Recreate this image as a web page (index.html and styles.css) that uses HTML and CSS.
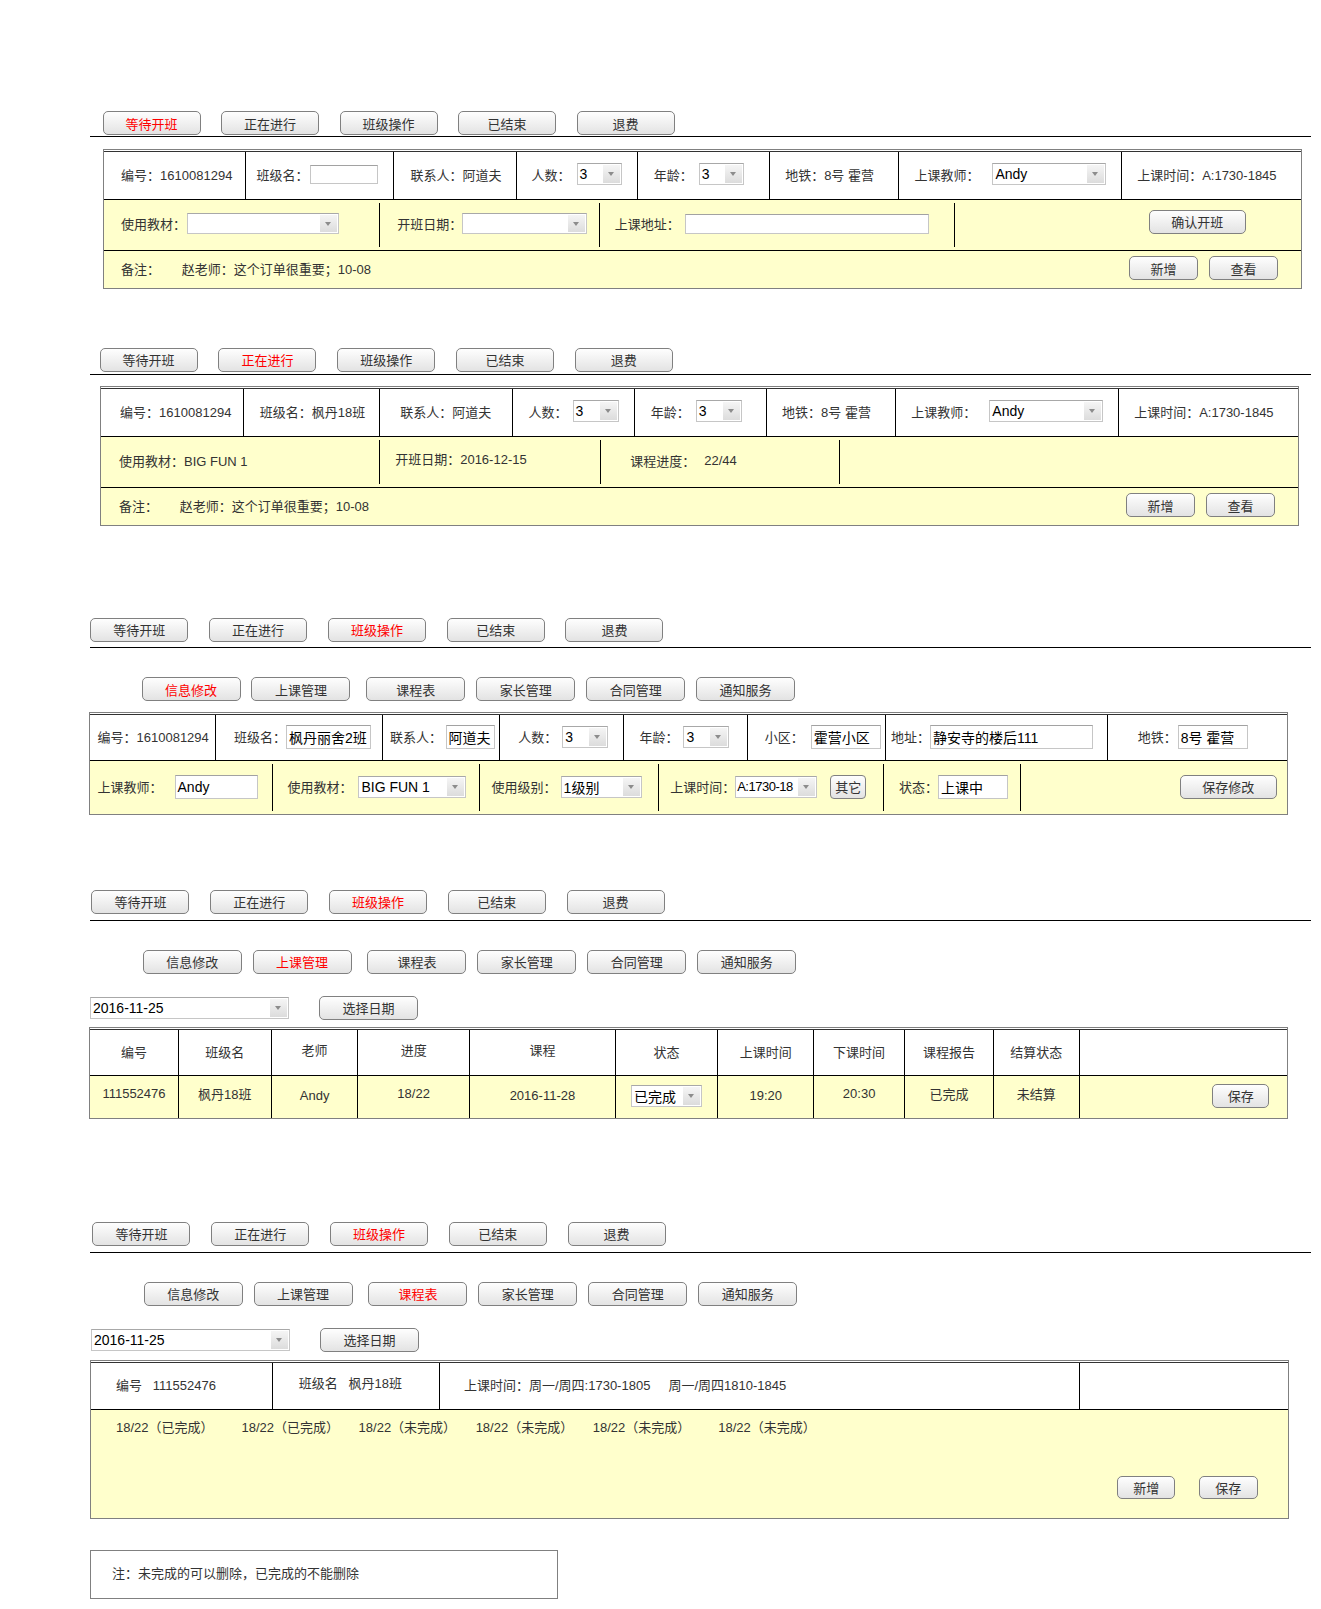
FILE: index.html
```html
<!DOCTYPE html>
<html lang="zh-CN">
<head>
<meta charset="utf-8">
<title>班级管理</title>
<link rel="stylesheet" href="styles.css">
</head>
<body>
<div class="page">

<!-- 1. 等待开班 -->
<section class="sec s1">
  <div class="tabs">
    <span class="btn tab on">等待开班</span>
    <span class="btn tab">正在进行</span>
    <span class="btn tab">班级操作</span>
    <span class="btn tab">已结束</span>
    <span class="btn tab">退费</span>
  </div>
  <div class="box">
    <div class="row r1">
      <div class="cell">编号：1610081294</div>
      <div class="cell">班级名：<span class="in w68 h19 ml1"></span></div>
      <div class="cell">联系人：阿道夫</div>
      <div class="cell">人数：<span class="sel w45 ml6"><span class="v">3</span><span class="a"></span></span></div>
      <div class="cell">年龄：<span class="sel w45 ml6"><span class="v">3</span><span class="a"></span></span></div>
      <div class="cell">地铁：8号 霍营</div>
      <div class="cell">上课教师：<span class="sel w114 ml13"><span class="v">Andy</span><span class="a"></span></span></div>
      <div class="cell">上课时间：A:1730-1845</div>
    </div>
    <div class="row r2 y">
      <div class="cell">使用教材：<span class="sel w152 h21 ml1"><span class="v"></span><span class="a"></span></span></div>
      <div class="cell">开班日期：<span class="sel w125 h21"><span class="v"></span><span class="a"></span></span></div>
      <div class="cell">上课地址：<span class="in w244 h20 ml5"></span></div>
      <div class="cell end"><span class="btn w97 up">确认开班</span></div>
    </div>
    <div class="row r3 y">
      <div class="cell">备注：<span class="note-text">赵老师：这个订单很重要；10-08</span><span class="acts"><span class="btn w69">新增</span><span class="btn w69">查看</span></span></div>
    </div>
  </div>
</section>

<!-- 2. 正在进行 -->
<section class="sec s2">
  <div class="tabs">
    <span class="btn tab">等待开班</span>
    <span class="btn tab on">正在进行</span>
    <span class="btn tab">班级操作</span>
    <span class="btn tab">已结束</span>
    <span class="btn tab">退费</span>
  </div>
  <div class="box">
    <div class="row r1">
      <div class="cell">编号：1610081294</div>
      <div class="cell">班级名：枫丹18班</div>
      <div class="cell">联系人：阿道夫</div>
      <div class="cell">人数：<span class="sel w46 ml5"><span class="v">3</span><span class="a"></span></span></div>
      <div class="cell">年龄：<span class="sel w46 ml6"><span class="v">3</span><span class="a"></span></span></div>
      <div class="cell">地铁：8号 霍营</div>
      <div class="cell">上课教师：<span class="sel w114 ml13"><span class="v">Andy</span><span class="a"></span></span></div>
      <div class="cell">上课时间：A:1730-1845</div>
    </div>
    <div class="row r2 y">
      <div class="cell">使用教材：BIG FUN 1</div>
      <div class="cell"><span class="up2">开班日期：2016-12-15</span></div>
      <div class="cell">课程进度：<span class="ml9">22/44</span></div>
      <div class="cell"></div>
    </div>
    <div class="row r3 y">
      <div class="cell">备注：<span class="note-text">赵老师：这个订单很重要；10-08</span><span class="acts"><span class="btn w69">新增</span><span class="btn w69">查看</span></span></div>
    </div>
  </div>
</section>

<!-- 3. 班级操作 / 信息修改 -->
<section class="sec s3">
  <div class="tabs">
    <span class="btn tab">等待开班</span>
    <span class="btn tab">正在进行</span>
    <span class="btn tab on">班级操作</span>
    <span class="btn tab">已结束</span>
    <span class="btn tab">退费</span>
  </div>
  <div class="subtabs">
    <span class="btn on">信息修改</span>
    <span class="btn">上课管理</span>
    <span class="btn">课程表</span>
    <span class="btn">家长管理</span>
    <span class="btn">合同管理</span>
    <span class="btn">通知服务</span>
  </div>
  <div class="box">
    <div class="row r1">
      <div class="cell">编号：1610081294</div>
      <div class="cell">班级名：<span class="in w85 h24">枫丹丽舍2班</span></div>
      <div class="cell">联系人：<span class="in w49 h24 ml3">阿道夫</span></div>
      <div class="cell">人数：<span class="sel w46 ml5"><span class="v">3</span><span class="a"></span></span></div>
      <div class="cell">年龄：<span class="sel w46 ml5"><span class="v">3</span><span class="a"></span></span></div>
      <div class="cell">小区：<span class="in w70 h24 ml7">霍营小区</span></div>
      <div class="cell">地址：<span class="in w163 h24">静安寺的楼后111</span></div>
      <div class="cell">地铁：<span class="in w70 h24 ml1">8号 霍营</span></div>
    </div>
    <div class="row r2 y">
      <div class="cell">上课教师：<span class="in w83 h24 ml12">Andy</span></div>
      <div class="cell">使用教材：<span class="sel w108 ml6"><span class="v">BIG FUN 1</span><span class="a"></span></span></div>
      <div class="cell">使用级别：<span class="sel w81 ml4"><span class="v">1级别</span><span class="a"></span></span></div>
      <div class="cell">上课时间：<span class="sel w82"><span class="v tight">A:1730-18</span><span class="a"></span></span><span class="btn small ml13">其它</span></div>
      <div class="cell">状态：<span class="in w70 h24">上课中</span></div>
      <div class="cell end"><span class="btn w97">保存修改</span></div>
    </div>
  </div>
</section>

<!-- 4. 上课管理 -->
<section class="sec s4">
  <div class="tabs">
    <span class="btn tab">等待开班</span>
    <span class="btn tab">正在进行</span>
    <span class="btn tab on">班级操作</span>
    <span class="btn tab">已结束</span>
    <span class="btn tab">退费</span>
  </div>
  <div class="subtabs">
    <span class="btn">信息修改</span>
    <span class="btn on">上课管理</span>
    <span class="btn">课程表</span>
    <span class="btn">家长管理</span>
    <span class="btn">合同管理</span>
    <span class="btn">通知服务</span>
  </div>
  <div class="daterow">
    <span class="sel date"><span class="v">2016-11-25</span><span class="a"></span></span>
    <span class="btn pick">选择日期</span>
  </div>
  <div class="box tbl">
    <div class="row r1">
      <div class="cell">编号</div>
      <div class="cell">班级名</div>
      <div class="cell"><span class="up2">老师</span></div>
      <div class="cell"><span class="up2">进度</span></div>
      <div class="cell"><span class="up2">课程</span></div>
      <div class="cell">状态</div>
      <div class="cell">上课时间</div>
      <div class="cell">下课时间</div>
      <div class="cell">课程报告</div>
      <div class="cell">结算状态</div>
      <div class="cell"></div>
    </div>
    <div class="row r2 y">
      <div class="cell"><span class="up2">111552476</span></div>
      <div class="cell"><span class="up2">枫丹18班</span></div>
      <div class="cell">Andy</div>
      <div class="cell"><span class="up2">18/22</span></div>
      <div class="cell">2016-11-28</div>
      <div class="cell"><span class="sel w71"><span class="v">已完成</span><span class="a"></span></span></div>
      <div class="cell">19:20</div>
      <div class="cell"><span class="up2">20:30</span></div>
      <div class="cell"><span class="up2">已完成</span></div>
      <div class="cell"><span class="up2">未结算</span></div>
      <div class="cell end"><span class="btn w57">保存</span></div>
    </div>
  </div>
</section>

<!-- 5. 课程表 -->
<section class="sec s5">
  <div class="tabs">
    <span class="btn tab">等待开班</span>
    <span class="btn tab">正在进行</span>
    <span class="btn tab on">班级操作</span>
    <span class="btn tab">已结束</span>
    <span class="btn tab">退费</span>
  </div>
  <div class="subtabs">
    <span class="btn">信息修改</span>
    <span class="btn">上课管理</span>
    <span class="btn on">课程表</span>
    <span class="btn">家长管理</span>
    <span class="btn">合同管理</span>
    <span class="btn">通知服务</span>
  </div>
  <div class="daterow">
    <span class="sel date"><span class="v">2016-11-25</span><span class="a"></span></span>
    <span class="btn pick">选择日期</span>
  </div>
  <div class="box">
    <div class="row r1">
      <div class="cell">编号&nbsp;&nbsp;&nbsp;111552476</div>
      <div class="cell"><span class="up2">班级名&nbsp;&nbsp;&nbsp;枫丹18班</span></div>
      <div class="cell">上课时间：周一/周四:1730-1805&nbsp;&nbsp;&nbsp;&nbsp;&nbsp;周一/周四1810-1845</div>
      <div class="cell"></div>
    </div>
    <div class="row r2 y">
      <div class="sched">
        <div class="items">
          <span>18/22（已完成）</span>
          <span class="gapx">18/22（已完成）</span>
          <span>18/22（未完成）</span>
          <span>18/22（未完成）</span>
          <span>18/22（未完成）</span>
          <span class="gapx">18/22（未完成）</span>
        </div>
        <div class="acts2">
          <span class="btn w58">新增</span>
          <span class="btn w58">保存</span>
        </div>
      </div>
    </div>
  </div>
  <div class="notebox">注：未完成的可以删除，已完成的不能删除</div>
</section>

</div>
</body>
</html>
```

FILE: styles.css
```css
* { box-sizing: border-box; }

body {
  margin: 0;
  background: #fff;
  font-family: "Liberation Sans", "Noto Sans CJK SC", sans-serif;
  font-size: 13px;
  color: #333;
}

.page { width: 1321px; padding: 0 0 10px 90px; }
.sec { width: 1221px; }

.s1 { margin-top: 111px; }
.s2 { margin-top: 59px; }
.s3 { margin-top: 92px; }
.s4 { margin-top: 74.3px; }
.s5 { margin-top: 103px; }

/* ---------- buttons ---------- */
.btn {
  display: inline-flex;
  align-items: center;
  justify-content: center;
  flex: none;
  height: 24px;
  border: 1px solid #808080;
  border-radius: 5px;
  background: linear-gradient(#fefefe, #e3e3e3);
  color: #333;
  font-size: 13px;
  white-space: nowrap;
}
.btn.on { color: #f00; }
.btn.small { width: 36px; height: 24px; border-radius: 4px; }
.w97 { width: 97.5px; }
.w69 { width: 69px; }
.w58 { width: 58.5px; height: 23px; }
.w57 { width: 56.5px; }

/* ---------- tab bars ---------- */
.tabs {
  display: flex;
  gap: 20.8px;
  border-bottom: 1px solid #000;
}
.tab { width: 98px; }
.s1 .tabs { padding: 0 0 1px 12.6px; gap: 20.5px; }
.s2 .tabs { padding: 0 0 2px 9.6px; }
.s3 .tabs { padding: 0 0 5.6px 0.3px; }
.s4 .tabs { padding: 0 0 6.3px 1.4px; }
.s5 .tabs { padding: 0 0 6px 2.4px; }

.subtabs {
  display: flex;
  gap: 10.9px;
  margin-top: 29px;
}
.subtabs .btn { width: 99px; }
.subtabs .btn:nth-child(3) { margin-left: 5px; }
.s3 .subtabs { padding-left: 51.6px; }
.s4 .subtabs { padding-left: 52.7px; margin-top: 28.7px; }
.s5 .subtabs { padding-left: 53.7px; }

/* ---------- form controls ---------- */
.in {
  display: inline-flex;
  align-items: center;
  flex: none;
  height: 22px;
  padding-left: 2px;
  border: 1px solid #c6c6c6;
  border-top-color: #a2a2a2;
  background: #fff;
  color: #000;
  font-size: 14px;
  white-space: nowrap;
  overflow: hidden;
}
.sel {
  display: inline-flex;
  flex: none;
  height: 22px;
  border: 1px solid #c6c6c6;
  border-top-color: #a8a8a8;
  background: #fff;
  color: #000;
  font-size: 14px;
}
.sel .v {
  flex: 1;
  min-width: 0;
  display: flex;
  align-items: center;
  padding-left: 2px;
  white-space: nowrap;
  overflow: hidden;
}
.sel .v.tight { font-size: 13px; letter-spacing: -0.5px; padding-left: 1px; }
.sel .a {
  position: relative;
  flex: none;
  width: 17px;
  margin: 1px;
  background: linear-gradient(#f5f5f5, #dcdcdc);
}
.sel .a::after {
  content: "";
  position: absolute;
  left: 50%;
  top: 50%;
  margin: -2px 0 0 -3.5px;
  border-left: 3.5px solid transparent;
  border-right: 3.5px solid transparent;
  border-top: 4px solid #8c8c8c;
}

.w45 { width: 45px; }
.w46 { width: 46px; }
.w49 { width: 49px; }
.w68 { width: 68px; }
.w70 { width: 70px; }
.w71 { width: 71px; }
.w81 { width: 81px; }
.w82 { width: 82px; }
.w83 { width: 83px; }
.w85 { width: 85px; }
.w108 { width: 108px; }
.w114 { width: 114px; }
.w125 { width: 125px; }
.w152 { width: 152px; }
.w163 { width: 163px; }
.w244 { width: 244px; }
.h19 { height: 19px; }
.h20 { height: 20px; }
.h21 { height: 21px; }
.h24 { height: 24px; }
.ml1 { margin-left: 1px; }
.ml3 { margin-left: 3.5px; }
.ml4 { margin-left: 4px; }
.ml5 { margin-left: 5px; }
.ml6 { margin-left: 6px; }
.ml7 { margin-left: 7px; }
.ml9 { margin-left: 9px; }
.ml12 { margin-left: 12px; }
.ml13 { margin-left: 13px; }
.up { position: relative; top: -2px; }
.up2 { position: relative; top: -2px; }

/* ---------- boxes ---------- */
.box {
  width: 1199px;
  border: 1px solid #808080;
  padding-top: 1px;
  background: #fff;
}
.row {
  display: grid;
  border-bottom: 1px solid #000;
}
.row:first-child { border-top: 1px solid #333; }
.row:last-child { border-bottom: 0; }
.y { background: #ffffcc; }

.cell {
  display: flex;
  align-items: center;
  min-width: 0;
  padding-left: 15.4px;
  padding-bottom: 2px;
  border-right: 1px solid #000;
  white-space: nowrap;
}
.cell:last-child { border-right: 0; }
.cell.end { justify-content: flex-end; }

.r2:not(.tbl .r2) .cell { margin: 3px 0; }

/* section 1 */
.s1 .box { margin: 11.5px 0 0 12.6px; }
.s1 .r1 { height: 49px; grid-template-columns: 142.7px 147.8px 123.2px 121.1px 131.4px 129.3px 222.7px 1fr; }
.s1 .r1 .cell:nth-child(1) { padding-left: 17.5px; }
.s1 .r1 .cell:nth-child(2) { padding-left: 10.3px; }
.s1 .r1 .cell:nth-child(3) { padding-left: 16.4px; }
.s1 .r1 .cell:nth-child(4) { padding-left: 14.3px; }
.s1 .r2 { height: 51px; grid-template-columns: 276.2px 220.6px 354.2px 1fr; }
.s1 .r2 .cell:nth-child(1) { padding-left: 17.5px; }
.s1 .r2 .cell:nth-child(2) { padding-left: 17.4px; }
.s1 .r2 .cell:nth-child(3) { padding-left: 14.4px; }
.s1 .r2 .cell:nth-child(4) { padding-right: 54.5px; }
.s1 .r3, .s2 .r3 { height: 37px; grid-template-columns: 1fr; }
.s1 .r3 .cell { padding-left: 17.5px; padding-right: 22.5px; }

.note-text { margin-left: 21.7px; }
.acts { margin-left: auto; display: flex; gap: 11px; }

/* section 2 */
.s2 .box { margin: 11.2px 0 0 9.6px; }
.s2 .r1 { height: 49px; grid-template-columns: 143.7px 135.5px 133.4px 122.1px 131.4px 129.3px 222.8px 1fr; }
.s2 .r1 .cell:nth-child(1) { padding-left: 19.5px; }
.s2 .r1 .cell:nth-child(3) { padding-left: 20.5px; }
.s2 .r2 { height: 51px; grid-template-columns: 279.2px 221.7px 238.1px 1fr; }
.s2 .r2 .cell:nth-child(1) { padding-left: 18.4px; }
.s2 .r2 .cell:nth-child(3) { padding-left: 28.7px; }
.s2 .r3 .cell { padding-left: 18.4px; padding-right: 22.6px; }

/* section 3 */
.s3 .box { margin: 11px 0 0 -0.7px; }
.s3 .r1 { height: 47px; grid-template-columns: 125.2px 167.3px 117.1px 124.1px 124.2px 137.6px 222.7px 1fr; }
.s3 .r1 .cell:nth-child(1) { padding-left: 7.2px; }
.s3 .r1 .cell:nth-child(2) { padding-left: 18.5px; }
.s3 .r1 .cell:nth-child(3) { padding-left: 7.2px; }
.s3 .r1 .cell:nth-child(4) { padding-left: 18.4px; }
.s3 .r1 .cell:nth-child(6) { padding-left: 16.5px; }
.s3 .r1 .cell:nth-child(7) { padding-left: 5.2px; }
.s3 .r1 .cell:nth-child(8) { padding-left: 29.2px; }
.s3 .r2 { height: 53px; grid-template-columns: 182.7px 207.4px 178.6px 224.7px 137.6px 1fr; }
.s3 .r2 .cell { margin: 4px 0 5px; }
.s3 .r2 .cell:nth-child(1) { padding-left: 7.2px; }
.s3 .r2 .cell:nth-child(2) { padding-left: 14.4px; }
.s3 .r2 .cell:nth-child(3) { padding-left: 11.2px; }
.s3 .r2 .cell:nth-child(4) { padding-left: 11.2px; }
.s3 .r2 .cell:nth-child(6) { padding-right: 10.2px; }

/* date rows */
.daterow {
  display: flex;
  align-items: center;
  height: 24px;
  margin-top: 22px;
}
.sel.date { width: 199px; }
.btn.pick { width: 99.6px; margin-left: 29.8px; }
.s5 .daterow { padding-left: 1px; }

/* section 4 table */
.s4 .box { margin: 7.3px 0 0 -0.7px; }
.tbl .row { grid-template-columns: 88.3px 93.4px 86.2px 111.9px 145.7px 102.7px 95.5px 91.3px 88.3px 86.2px 1fr; }
.tbl .r1 { height: 47px; }
.tbl .r2 { height: 42px; }
.tbl .cell { justify-content: center; padding-left: 0; }
.tbl .cell.end { justify-content: flex-end; padding-right: 18.4px; }

/* section 5 */
.s5 .box { margin: 7.7px 0 0 0.3px; }
.s5 .r1 { height: 48px; grid-template-columns: 181.7px 167.3px 639.5px 1fr; }
.s5 .r1 .cell:nth-child(1) { padding-left: 24.7px; }
.s5 .r1 .cell:nth-child(2) { padding-left: 25.7px; }
.s5 .r1 .cell:nth-child(3) { padding-left: 23.7px; }
.s5 .r2 { height: 108px; grid-template-columns: 1fr; }
.sched {
  display: flex;
  flex-direction: column;
  padding: 7px 30.8px 18.7px 24.7px;
}
.items { display: flex; gap: 19.5px; }
.items .gapx { margin-left: 8.5px; }
.acts2 {
  display: flex;
  justify-content: flex-end;
  gap: 23.6px;
  margin-top: auto;
}

.notebox {
  display: flex;
  align-items: center;
  width: 468px;
  height: 48.6px;
  margin: 31.7px 0 0 0.3px;
  padding: 0 0 5px 20.6px;
  border: 1px solid #808080;
}
```
